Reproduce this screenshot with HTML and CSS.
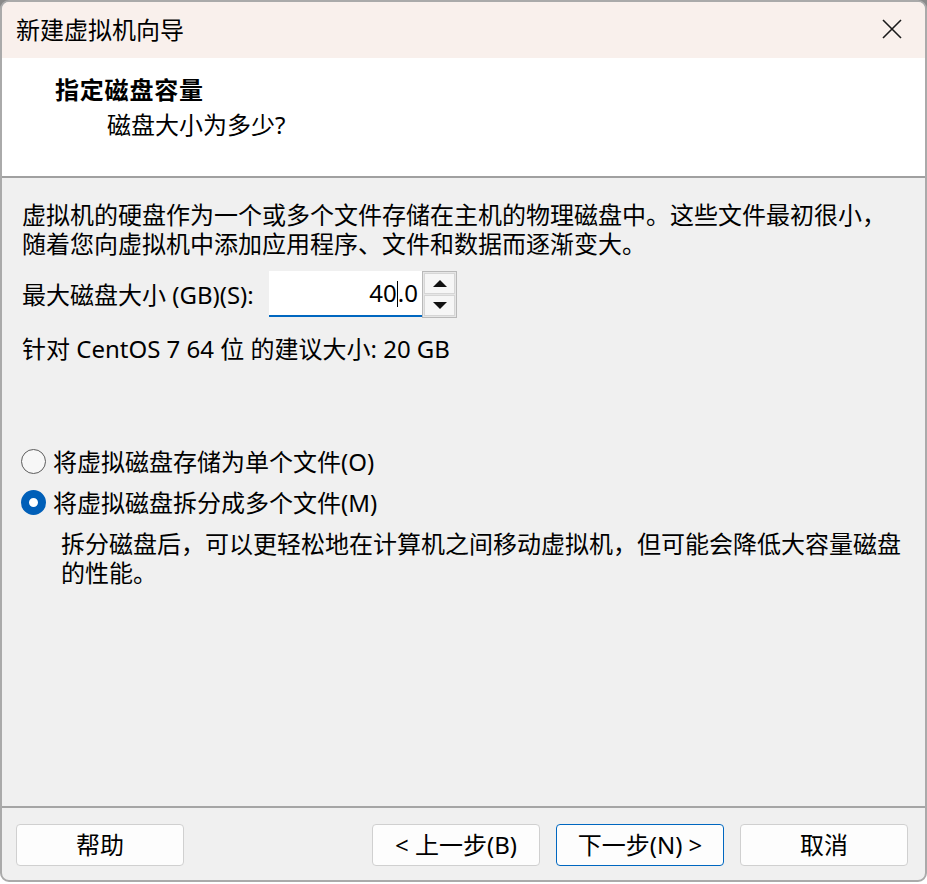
FILE: index.html
```html
<!DOCTYPE html>
<html lang="zh-CN">
<head>
<meta charset="utf-8">
<title>新建虚拟机向导</title>
<link rel="stylesheet" href="styles.css">
</head>
<body>
<div class="window">
  <div class="titlebar">
    <span class="title">新建虚拟机向导</span>
    <svg class="close" width="20" height="20" viewBox="0 0 20 20"><path d="M1 1 L19 19 M19 1 L1 19" stroke="#1a1a1a" stroke-width="1.6" fill="none"/></svg>
  </div>
  <div class="header">
    <div class="h-title">指定磁盘容量</div>
    <div class="h-sub">磁盘大小为多少?</div>
  </div>
  <div class="content">
    <p class="intro">虚拟机的硬盘作为一个或多个文件存储在主机的物理磁盘中。这些文件最初很小，<br>随着您向虚拟机中添加应用程序、文件和数据而逐渐变大。</p>
    <div class="size-row">
      <span class="size-label">最大磁盘大小 (GB)(S):</span>
      <div class="spin">
        <div class="spin-input">40<span class="caret"></span>.0</div>
        <div class="spin-btns">
          <span class="spin-btn"><span class="tri-up"></span></span>
          <span class="spin-btn"><span class="tri-down"></span></span>
        </div>
      </div>
    </div>
    <p class="rec">针对 CentOS 7 64 位 的建议大小: 20 GB</p>
    <div class="options">
      <div class="radio"><span class="circle"></span>将虚拟磁盘存储为单个文件(O)</div>
      <div class="radio"><span class="circle checked"></span>将虚拟磁盘拆分成多个文件(M)</div>
      <p class="desc">拆分磁盘后，可以更轻松地在计算机之间移动虚拟机，但可能会降低大容量磁盘<br>的性能。</p>
    </div>
  </div>
  <div class="footer">
    <button class="btn">帮助</button>
    <div class="nav">
      <button class="btn">&lt; 上一步(B)</button>
      <button class="btn default">下一步(N) &gt;</button>
      <button class="btn">取消</button>
    </div>
  </div>
</div>
</body>
</html>
```

FILE: styles.css
```css
* { box-sizing: border-box; }
html, body { margin: 0; padding: 0; }
body {
  width: 927px;
  height: 884px;
  background: linear-gradient(#8a8a8a 0 12px, #ffffff 12px);
  font-family: "Noto Sans", "Noto Sans CJK SC", sans-serif;
  font-size: 24px;
  color: #000;
}
.window {
  width: 927px;
  height: 882px;
  border: 2px solid #aaaaaa;
  border-radius: 9px;
  overflow: hidden;
  background: #f0f0f0;
  display: flex;
  flex-direction: column;
}
.titlebar {
  height: 56px;
  flex: none;
  background: #f9f0ec;
  display: flex;
  align-items: center;
  padding: 0 23px 2px 14px;
}
.title {
  font-family: "Noto Sans CJK SC", sans-serif;
  font-size: 24px;
  line-height: 30px;
}
.close { margin-left: auto; display: block; }
.header {
  height: 120px;
  flex: none;
  background: #fff;
  border-bottom: 2px solid #a0a0a0;
  padding: 15px 0 0 53px;
}
.h-title {
  font-family: "Noto Sans CJK SC", sans-serif;
  font-weight: bold;
  font-size: 24px;
  letter-spacing: 0.8px;
  line-height: 32px;
}
.h-sub {
  margin: 4px 0 0 52px;
  line-height: 32px;
}
.content {
  flex: 1;
  padding: 22px 0 0 20px;
}
p { margin: 0; }
.intro { line-height: 29px; white-space: nowrap; }
.size-row {
  margin-top: 13px;
  display: flex;
  align-items: center;
  height: 46px;
}
.size-label { width: 247px; flex: none; line-height: 29px; }
.spin { display: flex; height: 46px; }
.spin-input {
  width: 153px;
  height: 46px;
  background: #fff;
  border-bottom: 2px solid #0067c0;
  text-align: right;
  padding-right: 4px;
  line-height: 44px;
}
.caret {
  display: inline-block;
  width: 1px;
  height: 26px;
  background: #000;
  vertical-align: -5px;
}
.spin-btns {
  width: 35px;
  height: 47px;
  border: 1px solid #b9b9b9;
  display: flex;
  flex-direction: column;
  gap: 1px;
  padding: 1px;
  background: #e6e6e6;
}
.spin-btn {
  flex: 1;
  background: #f6f6f6;
  border: 1px solid #d6d6d6;
  display: flex;
  align-items: center;
  justify-content: center;
}
.tri-up, .tri-down { width: 0; height: 0; border-left: 7px solid transparent; border-right: 7px solid transparent; }
.tri-up { border-bottom: 7px solid #111; }
.tri-down { border-top: 7px solid #111; }
.rec { margin-top: 17px; line-height: 29px; }
.options { margin-top: 84px; }
.radio {
  display: flex;
  align-items: center;
  height: 29px;
  line-height: 29px;
  margin-bottom: 12px;
}
.circle {
  width: 25px;
  height: 25px;
  border-radius: 50%;
  border: 1.5px solid #5c5c5c;
  background: #f7f7f7;
  margin: 0 7px 0 -1px;
  flex: none;
}
.circle.checked {
  border: 8px solid #005fb8;
  background: #fff;
}
.desc {
  margin: 1px 0 0 39px;
  line-height: 29px;
  white-space: nowrap;
}
.footer {
  flex: none;
  height: 74px;
  border-top: 2px solid #a5a5a5;
  padding: 16px 17px 14px 14px;
  display: flex;
  justify-content: space-between;
}
.nav { display: flex; gap: 16px; }
.btn {
  width: 168px;
  height: 42px;
  background: #fdfdfd;
  border: 1px solid #d0d0d0;
  border-radius: 4px;
  font-family: "Noto Sans", "Noto Sans CJK SC", sans-serif;
  font-size: 24px;
  color: #000;
  padding: 0;
  line-height: 40px;
}
.btn.default { border-color: #0067c0; }
```
